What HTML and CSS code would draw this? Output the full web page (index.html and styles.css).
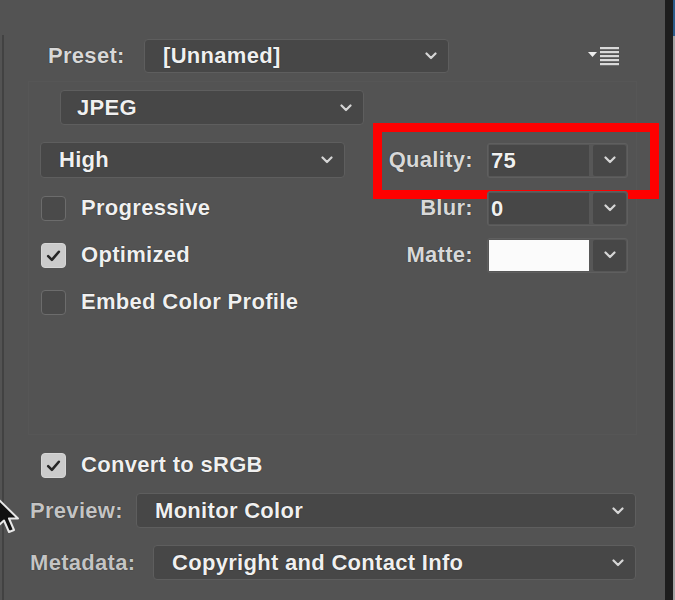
FILE: index.html
```html
<!DOCTYPE html>
<html lang="en">
<head>
    <meta charset="UTF-8">
    <title>Save for Web - JPEG</title>
    <link rel="stylesheet" href="styles.css">
</head>
<body>
<div class="stage">
    <div class="panel">
        <div class="row preset-row">
            <span class="label preset-label">Preset:</span>
            <div class="select preset-select">
                <span>[Unnamed]</span>
                <svg class="chevron" viewBox="0 0 12 8"><path d="M1.5 1.5 L6 6 L10.5 1.5"/></svg>
            </div>
            <svg class="menu-icon" width="32" height="20" viewBox="0 0 32 20">
                <path class="tri" d="M0 6 H9 L4.5 11 Z"/>
                <rect x="12" y="1" width="19" height="2.2"/>
                <rect x="12" y="5" width="19" height="2.2"/>
                <rect x="12" y="9" width="19" height="2.2"/>
                <rect x="12" y="13" width="19" height="2.2"/>
                <rect x="12" y="17" width="19" height="2.2"/>
            </svg>
        </div>

        <div class="group">
            <div class="select format-select">
                <span>JPEG</span>
                <svg class="chevron" viewBox="0 0 12 8"><path d="M1.5 1.5 L6 6 L10.5 1.5"/></svg>
            </div>

            <div class="settings">
                <div class="select quality-select">
                    <span>High</span>
                    <svg class="chevron" viewBox="0 0 12 8"><path d="M1.5 1.5 L6 6 L10.5 1.5"/></svg>
                </div>
                <div class="field-row quality-row">
                    <span class="mark"></span>
                    <span class="label">Quality:</span>
                    <div class="combo">
                        <span class="value">75</span>
                        <span class="arrow"><svg class="chevron" viewBox="0 0 12 8"><path d="M1.5 1.5 L6 6 L10.5 1.5"/></svg></span>
                    </div>
                </div>

                <div class="check">
                    <span class="box"></span>
                    <span class="text">Progressive</span>
                </div>
                <div class="field-row">
                    <span class="label">Blur:</span>
                    <div class="combo">
                        <span class="value">0</span>
                        <span class="arrow"><svg class="chevron" viewBox="0 0 12 8"><path d="M1.5 1.5 L6 6 L10.5 1.5"/></svg></span>
                    </div>
                </div>

                <div class="check checked">
                    <span class="box"><svg viewBox="0 0 14 12"><path d="M2 6.5 L5.5 10 L12 2.5"/></svg></span>
                    <span class="text">Optimized</span>
                </div>
                <div class="field-row">
                    <span class="label">Matte:</span>
                    <div class="combo">
                        <span class="value swatch"></span>
                        <span class="arrow"><svg class="chevron" viewBox="0 0 12 8"><path d="M1.5 1.5 L6 6 L10.5 1.5"/></svg></span>
                    </div>
                </div>

                <div class="check">
                    <span class="box"></span>
                    <span class="text">Embed Color Profile</span>
                </div>
            </div>
        </div>

        <div class="check checked srgb">
            <span class="box"><svg viewBox="0 0 14 12"><path d="M2 6.5 L5.5 10 L12 2.5"/></svg></span>
            <span class="text">Convert to sRGB</span>
        </div>

        <div class="row bottom-row preview-row">
            <span class="label">Preview:</span>
            <div class="select">
                <span>Monitor Color</span>
                <svg class="chevron" viewBox="0 0 12 8"><path d="M1.5 1.5 L6 6 L10.5 1.5"/></svg>
            </div>
        </div>
        <div class="row bottom-row metadata-row">
            <span class="label">Metadata:</span>
            <div class="select">
                <span>Copyright and Contact Info</span>
                <svg class="chevron" viewBox="0 0 12 8"><path d="M1.5 1.5 L6 6 L10.5 1.5"/></svg>
            </div>
        </div>

        <svg class="cursor" width="28" height="40" viewBox="0 0 28 40">
            <path d="M2 1 L2 30 L9 23.5 L14 35 L19 33 L14 21.5 L23 21.5 Z"/>
        </svg>
    </div>
    <div class="edge"></div>
    <div class="edge-light"></div>
</div>
</body>
</html>
```

FILE: styles.css
```css
body {
    margin: 0;
    background-color: #535353;
    font-family: "Liberation Sans", Arial, sans-serif;
    font-size: 22px;
    font-weight: bold;
    letter-spacing: 0.3px;
    color: #f0f0f0;
    overflow: hidden;
}
.stage {
    display: flex;
    height: 600px;
    width: 675px;
}
.panel {
    position: relative;
    width: 665px;
    padding-top: 39px;
    box-sizing: border-box;
    background-color: #535353;
}
.panel::before {
    content: "";
    position: absolute;
    left: 2px;
    top: 35px;
    bottom: 0;
    width: 2px;
    background-color: #424242;
}
.edge {
    width: 8px;
    background-color: #1d1d1d;
}
.edge-light {
    width: 2px;
    background: linear-gradient(#2c5d8a 0 6%, #a3a3a3 6%);
}
.row {
    display: flex;
    align-items: center;
}
.label {
    color: #d8d8d8;
    text-shadow: 0 0 1px #1a1a1a;
}
.select {
    display: flex;
    align-items: center;
    justify-content: space-between;
    height: 35px;
    box-sizing: border-box;
    padding: 0 11px 0 18px;
    background-color: #474747;
    border: 1px solid #5e5e5e;
    border-radius: 4px;
    text-shadow: 0 0 1px #111;
}
.chevron {
    width: 12px;
    height: 8px;
    fill: none;
    stroke: #d6d6d6;
    stroke-width: 2.2;
    stroke-linecap: round;
    stroke-linejoin: round;
}

/* preset */
.preset-row {
    height: 34px;
}
.preset-label {
    margin-left: 48px;
    width: 96px;
}
.preset-select {
    width: 305px;
    height: 34px;
}
.menu-icon {
    margin-left: 139px;
    fill: #d9d9d9;
}
.menu-icon .tri {
    fill: #ededed;
}

/* group box */
.group {
    margin: 8px 0 0 28px;
    width: 609px;
    height: 354px;
    box-sizing: border-box;
    padding-top: 8px;
    border: 1px solid #565656;
}
.format-select {
    margin-left: 31px;
    width: 304px;
    padding-left: 16px;
}
.settings {
    display: grid;
    grid-template-columns: 305px 1fr;
    grid-template-rows: 36px 34px 34px 34px;
    row-gap: 13px;
    align-items: center;
    margin: 17px 0 0 11px;
}
.quality-select {
    height: 36px;
}
.field-row {
    position: relative;
    display: flex;
    align-items: center;
}
.field-row .label {
    width: 128px;
    text-align: right;
    margin-right: 14px;
}
.combo {
    display: flex;
    gap: 4px;
    height: 35px;
    box-sizing: border-box;
    padding: 1px;
    border: 1px solid #5f5f5f;
    border-radius: 3px;
    background-color: #575757;
}
.combo .value {
    width: 100px;
    padding-left: 2px;
    box-sizing: border-box;
    line-height: 31px;
    background-color: #474747;
    text-shadow: 0 0 1px #111;
}
.combo .swatch {
    background-color: #fbfbfb;
}
.combo .arrow {
    display: flex;
    align-items: center;
    justify-content: center;
    width: 33px;
    background-color: #474747;
    border-radius: 2px;
}
.mark {
    position: absolute;
    left: 28px;
    right: -23px;
    top: -20px;
    bottom: -21px;
    border: 9px solid #ff0000;
}

/* checkboxes */
.check {
    display: flex;
    align-items: center;
    gap: 15px;
    margin-left: 1px;
}
.check .box {
    display: flex;
    align-items: center;
    justify-content: center;
    width: 25px;
    height: 25px;
    box-sizing: border-box;
    border: 1px solid #6c6c6c;
    border-radius: 4px;
    background-color: #4a4a4a;
}
.check.checked .box {
    background-color: #cbcbcb;
    border-color: #d6d6d6;
}
.check .box svg {
    width: 15px;
    height: 13px;
    fill: none;
    stroke: #262626;
    stroke-width: 2.4;
    stroke-linecap: round;
    stroke-linejoin: round;
}
.check .text {
    text-shadow: 0 0 1px #111;
}
.srgb {
    margin: 17px 0 0 41px;
}

/* bottom rows */
.bottom-row .label {
    margin-left: 30px;
    color: #c4c4c4;
}
.preview-row {
    margin-top: 15px;
}
.preview-row .label {
    width: 106px;
}
.preview-row .select {
    width: 500px;
}
.metadata-row {
    margin-top: 17px;
}
.metadata-row .label {
    width: 123px;
}
.metadata-row .select {
    width: 483px;
}

.cursor {
    position: absolute;
    left: -5px;
    top: 497px;
    fill: #111;
    stroke: #e8e8e8;
    stroke-width: 2;
    stroke-linejoin: round;
}
```
